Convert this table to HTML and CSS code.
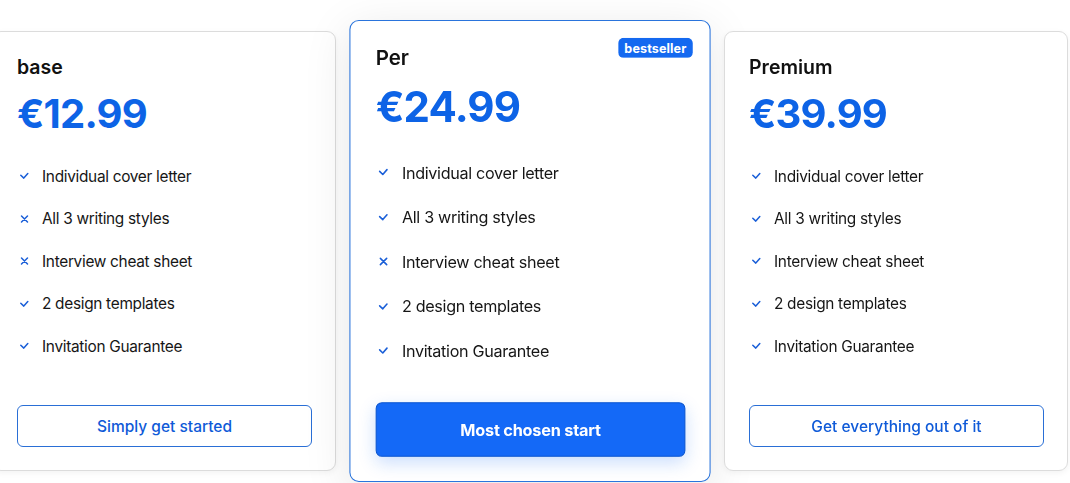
FILE: index.html
```html
<!DOCTYPE html>
<html>
<head>
<meta charset="utf-8">
<link rel="stylesheet" href="styles.css">
</head>
<body>
<div class="plans">
  <div class="card">
    <h3 class="name">base</h3>
    <div class="price">€12.99</div>
    <ul class="features">
      <li><svg class="ic" viewBox="0 0 14 14"><path d="M3.8 6.2l3 2.9 4-4.6"/></svg>Individual cover letter</li>
      <li><svg class="ic" viewBox="0 0 14 14"><path d="M4.5 4l6 6M10.5 4l-6 6"/></svg>All 3 writing styles</li>
      <li><svg class="ic" viewBox="0 0 14 14"><path d="M4.5 4l6 6M10.5 4l-6 6"/></svg>Interview cheat sheet</li>
      <li><svg class="ic" viewBox="0 0 14 14"><path d="M3.8 6.2l3 2.9 4-4.6"/></svg>2 design templates</li>
      <li><svg class="ic" viewBox="0 0 14 14"><path d="M3.8 6.2l3 2.9 4-4.6"/></svg>Invitation Guarantee</li>
    </ul>
    <button class="btn btn-outline">Simply get started</button>
  </div>
  <div class="card card-featured">
    <span class="badge">bestseller</span>
    <h3 class="name">Per</h3>
    <div class="price">€24.99</div>
    <ul class="features">
      <li><svg class="ic" viewBox="0 0 14 14"><path d="M3.8 6.2l3 2.9 4-4.6"/></svg>Individual cover letter</li>
      <li><svg class="ic" viewBox="0 0 14 14"><path d="M3.8 6.2l3 2.9 4-4.6"/></svg>All 3 writing styles</li>
      <li><svg class="ic" viewBox="0 0 14 14"><path d="M4.5 4l6 6M10.5 4l-6 6"/></svg>Interview cheat sheet</li>
      <li><svg class="ic" viewBox="0 0 14 14"><path d="M3.8 6.2l3 2.9 4-4.6"/></svg>2 design templates</li>
      <li><svg class="ic" viewBox="0 0 14 14"><path d="M3.8 6.2l3 2.9 4-4.6"/></svg>Invitation Guarantee</li>
    </ul>
    <button class="btn btn-solid">Most chosen start</button>
  </div>
  <div class="card">
    <h3 class="name">Premium</h3>
    <div class="price">€39.99</div>
    <ul class="features">
      <li><svg class="ic" viewBox="0 0 14 14"><path d="M3.8 6.2l3 2.9 4-4.6"/></svg>Individual cover letter</li>
      <li><svg class="ic" viewBox="0 0 14 14"><path d="M3.8 6.2l3 2.9 4-4.6"/></svg>All 3 writing styles</li>
      <li><svg class="ic" viewBox="0 0 14 14"><path d="M3.8 6.2l3 2.9 4-4.6"/></svg>Interview cheat sheet</li>
      <li><svg class="ic" viewBox="0 0 14 14"><path d="M3.8 6.2l3 2.9 4-4.6"/></svg>2 design templates</li>
      <li><svg class="ic" viewBox="0 0 14 14"><path d="M3.8 6.2l3 2.9 4-4.6"/></svg>Invitation Guarantee</li>
    </ul>
    <button class="btn btn-outline">Get everything out of it</button>
  </div>
</div>
</body>
</html>
```

FILE: styles.css
```css
* { box-sizing: border-box; }
html, body { margin: 0; padding: 0; background: #fff; }
body { font-family: Inter, "Noto Sans", sans-serif; color: #111; overflow-x: hidden; }

.plans {
  display: flex;
  gap: 22px;
  padding: 31px 0 20px;
  margin-left: -8px;
}

.card {
  position: relative;
  width: 344px;
  height: 440px;
  flex: none;
  display: flex;
  flex-direction: column;
  background: #fff;
  border: 1px solid #dcdcdc;
  border-radius: 9px;
  padding: 24px 23px 23px 24px;
  box-shadow: 0 2px 6px rgba(0,0,0,0.05);
}

.card-featured {
  border-color: #2a74dc;
  transform: scale(1.05);
  box-shadow: 0 10px 45px rgba(0,0,0,0.10);
}

.badge {
  position: absolute;
  top: 16px;
  right: 16px;
  background: #1469f0;
  color: #fff;
  font-size: 12px;
  font-weight: 700;
  line-height: 19px;
  padding: 0 6px;
  border-radius: 5px;
  letter-spacing: 0.1px;
}

.name {
  margin: 0;
  font-size: 19.5px;
  font-weight: 600;
  line-height: 22px;
  color: #111;
}

.price {
  margin-top: 13px;
  font-size: 40px;
  font-weight: 700;
  line-height: 46px;
  color: #0d63e6;
  letter-spacing: -0.8px;
}

.features {
  list-style: none;
  margin: 18px 0 0;
  padding: 0;
}

.features li {
  display: flex;
  align-items: center;
  height: 42.5px;
  font-size: 15.4px;
  letter-spacing: -0.3px;
  color: #161616;
}

.ic {
  width: 14px;
  height: 14px;
  flex: none;
  margin-right: 11px;
  fill: none;
  stroke: #1a5fd8;
  stroke-width: 1.5;
  stroke-linecap: round;
  stroke-linejoin: round;
}

.btn {
  margin-top: auto;
  font-family: inherit;
  width: 100%;
  border-radius: 6px;
  cursor: pointer;
}

.btn-outline {
  height: 42px;
  background: #fff;
  border: 1px solid #2a6fd6;
  color: #0f5ad8;
  font-size: 15.5px;
  font-weight: 500;
}

.btn-solid {
  height: 52px;
  background: #1469f7;
  border: 1px solid #0a55d0;
  color: #fff;
  font-size: 15.5px;
  font-weight: 700;
  letter-spacing: -0.2px;
  box-shadow: 0 6px 16px rgba(20,105,247,0.22);
}
```
